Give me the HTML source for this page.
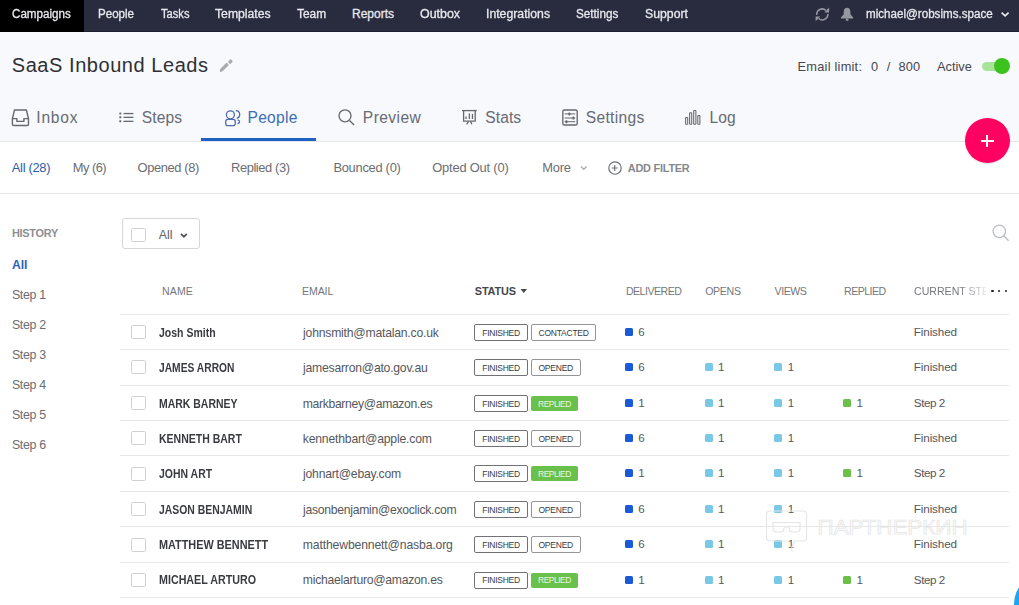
<!DOCTYPE html>
<html><head><meta charset="utf-8"><style>
html,body{margin:0;padding:0;width:1019px;height:605px;overflow:hidden;background:#fff}
body{position:relative;font-family:"Liberation Sans",sans-serif}
.t{position:absolute;line-height:1;white-space:nowrap}
.b{position:absolute;box-sizing:border-box}
.i{position:absolute;overflow:visible}
</style></head><body>
<div class="b" style="left:0px;top:0px;width:1019px;height:31px;background:#292b3f"></div>
<div class="b" style="left:0px;top:31px;width:1019px;height:1px;background:#1e1f2e"></div>
<div class="b" style="left:0px;top:0px;width:84px;height:32px;background:#000"></div>
<div class="b" style="left:0px;top:32px;width:1019px;height:109px;background:#f8f9fc"></div>
<div class="b" style="left:0px;top:141px;width:1019px;height:1px;background:#e5e6ea"></div>
<div class="t" style="left:12.30px;top:8.00px;font-size:12.00px;letter-spacing:0.000px;color:#e8e9ee;-webkit-text-stroke:0.3px #e8e9ee;transform:scaleX(0.9687);transform-origin:0.00px 0;">Campaigns</div>
<div class="t" style="left:97.70px;top:8.00px;font-size:12.00px;letter-spacing:0.000px;color:#e8e9ee;-webkit-text-stroke:0.3px #e8e9ee;transform:scaleX(0.9652);transform-origin:0.00px 0;">People</div>
<div class="t" style="left:160.50px;top:8.00px;font-size:12.00px;letter-spacing:0.000px;color:#e8e9ee;-webkit-text-stroke:0.3px #e8e9ee;transform:scaleX(0.9283);transform-origin:0.00px 0;">Tasks</div>
<div class="t" style="left:215.40px;top:8.00px;font-size:12.00px;letter-spacing:0.000px;color:#e8e9ee;-webkit-text-stroke:0.3px #e8e9ee;transform:scaleX(1.0165);transform-origin:0.00px 0;">Templates</div>
<div class="t" style="left:297.00px;top:8.00px;font-size:12.00px;letter-spacing:0.000px;color:#e8e9ee;-webkit-text-stroke:0.3px #e8e9ee;transform:scaleX(0.9898);transform-origin:0.00px 0;">Team</div>
<div class="t" style="left:352.00px;top:8.00px;font-size:12.00px;letter-spacing:0.000px;color:#e8e9ee;-webkit-text-stroke:0.3px #e8e9ee;transform:scaleX(1.0000);transform-origin:0.00px 0;">Reports</div>
<div class="t" style="left:419.50px;top:8.00px;font-size:12.00px;letter-spacing:0.000px;color:#e8e9ee;-webkit-text-stroke:0.3px #e8e9ee;transform:scaleX(1.0362);transform-origin:0.00px 0;">Outbox</div>
<div class="t" style="left:486.00px;top:8.00px;font-size:12.00px;letter-spacing:0.000px;color:#e8e9ee;-webkit-text-stroke:0.3px #e8e9ee;transform:scaleX(1.0207);transform-origin:0.00px 0;">Integrations</div>
<div class="t" style="left:576.00px;top:8.00px;font-size:12.00px;letter-spacing:0.000px;color:#e8e9ee;-webkit-text-stroke:0.3px #e8e9ee;transform:scaleX(0.9770);transform-origin:0.00px 0;">Settings</div>
<div class="t" style="left:644.70px;top:8.00px;font-size:12.00px;letter-spacing:0.000px;color:#e8e9ee;-webkit-text-stroke:0.3px #e8e9ee;transform:scaleX(1.0214);transform-origin:0.00px 0;">Support</div>
<div class="t" style="left:866.30px;top:8.00px;font-size:12.00px;letter-spacing:0.000px;color:#e8e9ee;-webkit-text-stroke:0.3px #e8e9ee;transform:scaleX(0.9679);transform-origin:0.00px 0;">michael@robsims.space</div>
<div class="t" style="left:11.80px;top:55.00px;font-size:20.00px;letter-spacing:0.553px;color:#2e3034;">SaaS Inbound Leads</div>
<div class="t" style="left:797.60px;top:61.00px;font-size:12.80px;letter-spacing:0.227px;color:#45474c;">Email limit:</div>
<div class="t" style="left:871.00px;top:61.00px;font-size:12.80px;letter-spacing:0.000px;color:#45474c;">0</div>
<div class="t" style="left:886.70px;top:61.00px;font-size:12.80px;letter-spacing:0.000px;color:#45474c;">/</div>
<div class="t" style="left:898.40px;top:61.00px;font-size:12.80px;letter-spacing:0.200px;color:#45474c;">800</div>
<div class="t" style="left:937.00px;top:61.00px;font-size:12.80px;letter-spacing:-0.020px;color:#45474c;">Active</div>
<div class="b" style="left:982px;top:62px;width:26px;height:9px;background:#a8e39a;border-radius:5px"></div>
<div class="b" style="left:994px;top:58px;width:16px;height:16px;background:#3cc21e;border-radius:50%"></div>
<div class="t" style="left:36.30px;top:110.00px;font-size:15.60px;letter-spacing:0.750px;color:#676b73;">Inbox</div>
<div class="t" style="left:141.70px;top:110.00px;font-size:15.60px;letter-spacing:0.125px;color:#676b73;">Steps</div>
<div class="t" style="left:247.50px;top:110.00px;font-size:15.60px;letter-spacing:0.260px;color:#3f6db5;">People</div>
<div class="t" style="left:362.80px;top:110.00px;font-size:15.60px;letter-spacing:0.433px;color:#676b73;">Preview</div>
<div class="t" style="left:485.30px;top:110.00px;font-size:15.60px;letter-spacing:0.075px;color:#676b73;">Stats</div>
<div class="t" style="left:585.80px;top:110.00px;font-size:15.60px;letter-spacing:0.300px;color:#676b73;">Settings</div>
<div class="t" style="left:709.50px;top:110.00px;font-size:15.60px;letter-spacing:0.050px;color:#676b73;">Log</div>
<div class="b" style="left:201px;top:138px;width:115px;height:3px;background:#2160c4"></div>
<div class="b" style="left:965px;top:118px;width:45px;height:45px;border-radius:50%;background:#ff0261;box-shadow:0 1px 2px rgba(0,0,0,.12)"></div>
<div class="b" style="left:981px;top:139.5px;width:12.5px;height:2px;background:#fff"></div>
<div class="b" style="left:986.25px;top:134.5px;width:2px;height:12.5px;background:#fff"></div>
<div class="t" style="left:11.80px;top:162.00px;font-size:12.90px;letter-spacing:-0.300px;color:#2d5cab;">All (28)</div>
<div class="t" style="left:72.70px;top:162.00px;font-size:12.90px;letter-spacing:-0.520px;color:#6b6d72;">My (6)</div>
<div class="t" style="left:137.50px;top:162.00px;font-size:12.90px;letter-spacing:-0.389px;color:#6b6d72;">Opened (8)</div>
<div class="t" style="left:231.00px;top:162.00px;font-size:12.90px;letter-spacing:-0.410px;color:#6b6d72;">Replied (3)</div>
<div class="t" style="left:333.40px;top:162.00px;font-size:12.90px;letter-spacing:-0.280px;color:#6b6d72;">Bounced (0)</div>
<div class="t" style="left:432.30px;top:162.00px;font-size:12.90px;letter-spacing:-0.200px;color:#6b6d72;">Opted Out (0)</div>
<div class="t" style="left:542.20px;top:162.00px;font-size:12.90px;letter-spacing:-0.233px;color:#6b6d72;">More</div>
<div class="t" style="left:627.80px;top:163.00px;font-size:10.90px;font-weight:bold;letter-spacing:-0.222px;color:#86888d;">ADD FILTER</div>
<div class="b" style="left:0px;top:193px;width:1019px;height:1px;background:#e6e6e8"></div>
<div class="t" style="left:11.90px;top:228.00px;font-size:10.90px;font-weight:bold;letter-spacing:-0.233px;color:#8c8e92;">HISTORY</div>
<div class="t" style="left:11.90px;top:259.00px;font-size:12.20px;font-weight:bold;letter-spacing:0.000px;color:#2d62b5;">All</div>
<div class="t" style="left:11.90px;top:289.00px;font-size:12.40px;letter-spacing:-0.320px;color:#6a6c70;">Step 1</div>
<div class="t" style="left:11.90px;top:319.00px;font-size:12.40px;letter-spacing:-0.320px;color:#6a6c70;">Step 2</div>
<div class="t" style="left:11.90px;top:349.00px;font-size:12.40px;letter-spacing:-0.320px;color:#6a6c70;">Step 3</div>
<div class="t" style="left:11.90px;top:379.00px;font-size:12.40px;letter-spacing:-0.320px;color:#6a6c70;">Step 4</div>
<div class="t" style="left:11.90px;top:409.00px;font-size:12.40px;letter-spacing:-0.320px;color:#6a6c70;">Step 5</div>
<div class="t" style="left:11.90px;top:439.00px;font-size:12.40px;letter-spacing:-0.320px;color:#6a6c70;">Step 6</div>
<div class="b" style="left:121.5px;top:218.2px;width:78px;height:31.3px;border:1px solid #d6d7da;border-radius:3px;background:#fff"></div>
<div class="b" style="left:131.3px;top:227.9px;width:14.4px;height:14px;border:1px solid #d0d1d4;border-radius:1.5px;background:#fff"></div>
<div class="t" style="left:158.70px;top:229.00px;font-size:12.40px;letter-spacing:0.000px;color:#5f6166;">All</div>
<div class="t" style="left:162.00px;top:286.00px;font-size:10.60px;letter-spacing:0.100px;color:#75777c;">NAME</div>
<div class="t" style="left:302.00px;top:286.00px;font-size:10.60px;letter-spacing:-0.125px;color:#75777c;">EMAIL</div>
<div class="t" style="left:474.80px;top:286.00px;font-size:10.90px;font-weight:bold;letter-spacing:-0.140px;color:#45474b;">STATUS</div>
<div class="t" style="left:625.90px;top:286.00px;font-size:10.60px;letter-spacing:-0.500px;color:#75777c;">DELIVERED</div>
<div class="t" style="left:705.20px;top:286.00px;font-size:10.60px;letter-spacing:-0.325px;color:#75777c;">OPENS</div>
<div class="t" style="left:774.60px;top:286.00px;font-size:10.60px;letter-spacing:-0.475px;color:#75777c;">VIEWS</div>
<div class="t" style="left:844.00px;top:286.00px;font-size:10.60px;letter-spacing:-0.517px;color:#75777c;">REPLIED</div>
<div class="t" style="left:914.00px;top:286.00px;font-size:10.60px;letter-spacing:0.000px;color:#75777c;width:72px;overflow:hidden;white-space:nowrap;-webkit-mask-image:linear-gradient(90deg,#000 62%,rgba(0,0,0,0.15) 100%)">CURRENT STEP</div>
<div class="b" style="left:991.2px;top:289.5px;width:2.6px;height:2.6px;background:#222;border-radius:50%"></div>
<div class="b" style="left:997.7px;top:289.5px;width:2.6px;height:2.6px;background:#222;border-radius:50%"></div>
<div class="b" style="left:1004.7px;top:289.5px;width:2.6px;height:2.6px;background:#222;border-radius:50%"></div>
<div class="b" style="left:120px;top:314px;width:889px;height:1px;background:#e6e7e9"></div>
<div class="b" style="left:120px;top:349px;width:889px;height:1px;background:#e6e7e9"></div>
<div class="b" style="left:120px;top:385px;width:889px;height:1px;background:#e6e7e9"></div>
<div class="b" style="left:120px;top:420px;width:889px;height:1px;background:#e6e7e9"></div>
<div class="b" style="left:120px;top:455px;width:889px;height:1px;background:#e6e7e9"></div>
<div class="b" style="left:120px;top:491px;width:889px;height:1px;background:#e6e7e9"></div>
<div class="b" style="left:120px;top:526px;width:889px;height:1px;background:#e6e7e9"></div>
<div class="b" style="left:120px;top:562px;width:889px;height:1px;background:#e6e7e9"></div>
<div class="b" style="left:120px;top:597px;width:889px;height:1px;background:#e6e7e9"></div>
<div class="b" style="left:131.3px;top:325px;width:14.3px;height:14.3px;border:1.2px solid #d0d1d3;border-radius:1.5px;background:#fff"></div>
<div class="t" style="left:158.80px;top:327.00px;font-size:12.00px;font-weight:bold;letter-spacing:0.000px;color:#393b40;transform:scaleX(0.8764);transform-origin:0.00px 0;">Josh Smith</div>
<div class="t" style="left:303.10px;top:327.00px;font-size:12.20px;letter-spacing:-0.214px;color:#55575c;">johnsmith@matalan.co.uk</div>
<div class="b" style="left:474px;top:324px;width:54px;height:16.5px;border:1px solid #707276;border-radius:2px;background:#fff"></div>
<div class="t" style="left:482.30px;top:329.00px;font-size:8.50px;letter-spacing:-0.271px;color:#3a3c40;">FINISHED</div>
<div class="b" style="left:530.7px;top:324px;width:65.79999999999995px;height:16.5px;border:1px solid #939599;border-radius:2px;background:#fff"></div>
<div class="t" style="left:538.50px;top:329.00px;font-size:8.50px;letter-spacing:-0.225px;color:#3a3c40;">CONTACTED</div>
<div class="b" style="left:625px;top:327.8px;width:8px;height:8px;background:#1a5ad6;border-radius:1.5px"></div>
<div class="t" style="left:638.30px;top:326.00px;font-size:11.60px;letter-spacing:0.000px;color:#55575c;">6</div>
<div class="t" style="left:913.80px;top:326.00px;font-size:11.70px;letter-spacing:-0.129px;color:#55575c;">Finished</div>
<div class="b" style="left:131.3px;top:360px;width:14.3px;height:14.3px;border:1.2px solid #d0d1d3;border-radius:1.5px;background:#fff"></div>
<div class="t" style="left:158.80px;top:362.00px;font-size:12.00px;font-weight:bold;letter-spacing:0.000px;color:#393b40;transform:scaleX(0.8549);transform-origin:0.00px 0;">JAMES ARRON</div>
<div class="t" style="left:303.10px;top:362.00px;font-size:12.20px;letter-spacing:-0.230px;color:#55575c;">jamesarron@ato.gov.au</div>
<div class="b" style="left:474px;top:359px;width:54px;height:16.5px;border:1px solid #707276;border-radius:2px;background:#fff"></div>
<div class="t" style="left:482.30px;top:364.00px;font-size:8.50px;letter-spacing:-0.271px;color:#3a3c40;">FINISHED</div>
<div class="b" style="left:530.7px;top:359px;width:50.0px;height:16.5px;border:1px solid #939599;border-radius:2px;background:#fff"></div>
<div class="t" style="left:538.50px;top:364.00px;font-size:8.50px;letter-spacing:-0.240px;color:#3a3c40;">OPENED</div>
<div class="b" style="left:625px;top:362.8px;width:8px;height:8px;background:#1a5ad6;border-radius:1.5px"></div>
<div class="t" style="left:638.30px;top:361.00px;font-size:11.60px;letter-spacing:0.000px;color:#55575c;">6</div>
<div class="b" style="left:704.6px;top:362.8px;width:8px;height:8px;background:#79c8e6;border-radius:1.5px"></div>
<div class="t" style="left:717.90px;top:361.00px;font-size:11.60px;letter-spacing:0.000px;color:#55575c;">1</div>
<div class="b" style="left:774.4px;top:362.8px;width:8px;height:8px;background:#79c8e6;border-radius:1.5px"></div>
<div class="t" style="left:787.70px;top:361.00px;font-size:11.60px;letter-spacing:0.000px;color:#55575c;">1</div>
<div class="t" style="left:913.80px;top:361.00px;font-size:11.70px;letter-spacing:-0.129px;color:#55575c;">Finished</div>
<div class="b" style="left:131.3px;top:396px;width:14.3px;height:14.3px;border:1.2px solid #d0d1d3;border-radius:1.5px;background:#fff"></div>
<div class="t" style="left:158.80px;top:398.00px;font-size:12.00px;font-weight:bold;letter-spacing:0.000px;color:#393b40;transform:scaleX(0.8722);transform-origin:0.00px 0;">MARK BARNEY</div>
<div class="t" style="left:302.80px;top:398.00px;font-size:12.20px;letter-spacing:-0.347px;color:#55575c;">markbarney@amazon.es</div>
<div class="b" style="left:474px;top:395px;width:54px;height:16.5px;border:1px solid #707276;border-radius:2px;background:#fff"></div>
<div class="t" style="left:482.30px;top:400.00px;font-size:8.50px;letter-spacing:-0.271px;color:#3a3c40;">FINISHED</div>
<div class="b" style="left:531px;top:395.6px;width:47px;height:15.4px;background:#69c04a;border-radius:2px"></div>
<div class="t" style="left:538.00px;top:400.00px;font-size:8.50px;letter-spacing:-0.500px;color:#eaf7e2;">REPLIED</div>
<div class="b" style="left:625px;top:398.8px;width:8px;height:8px;background:#1a5ad6;border-radius:1.5px"></div>
<div class="t" style="left:638.30px;top:397.00px;font-size:11.60px;letter-spacing:0.000px;color:#55575c;">1</div>
<div class="b" style="left:704.6px;top:398.8px;width:8px;height:8px;background:#79c8e6;border-radius:1.5px"></div>
<div class="t" style="left:717.90px;top:397.00px;font-size:11.60px;letter-spacing:0.000px;color:#55575c;">1</div>
<div class="b" style="left:774.4px;top:398.8px;width:8px;height:8px;background:#79c8e6;border-radius:1.5px"></div>
<div class="t" style="left:787.70px;top:397.00px;font-size:11.60px;letter-spacing:0.000px;color:#55575c;">1</div>
<div class="b" style="left:843.2px;top:398.8px;width:8px;height:8px;background:#6cbf47;border-radius:1.5px"></div>
<div class="t" style="left:856.50px;top:397.00px;font-size:11.60px;letter-spacing:0.000px;color:#55575c;">1</div>
<div class="t" style="left:913.80px;top:397.00px;font-size:11.70px;letter-spacing:-0.460px;color:#55575c;">Step 2</div>
<div class="b" style="left:131.3px;top:431px;width:14.3px;height:14.3px;border:1.2px solid #d0d1d3;border-radius:1.5px;background:#fff"></div>
<div class="t" style="left:158.80px;top:433.00px;font-size:12.00px;font-weight:bold;letter-spacing:0.000px;color:#393b40;transform:scaleX(0.8754);transform-origin:0.00px 0;">KENNETH BART</div>
<div class="t" style="left:302.80px;top:433.00px;font-size:12.20px;letter-spacing:-0.195px;color:#55575c;">kennethbart@apple.com</div>
<div class="b" style="left:474px;top:430px;width:54px;height:16.5px;border:1px solid #707276;border-radius:2px;background:#fff"></div>
<div class="t" style="left:482.30px;top:435.00px;font-size:8.50px;letter-spacing:-0.271px;color:#3a3c40;">FINISHED</div>
<div class="b" style="left:530.7px;top:430px;width:50.0px;height:16.5px;border:1px solid #939599;border-radius:2px;background:#fff"></div>
<div class="t" style="left:538.50px;top:435.00px;font-size:8.50px;letter-spacing:-0.240px;color:#3a3c40;">OPENED</div>
<div class="b" style="left:625px;top:433.8px;width:8px;height:8px;background:#1a5ad6;border-radius:1.5px"></div>
<div class="t" style="left:638.30px;top:432.00px;font-size:11.60px;letter-spacing:0.000px;color:#55575c;">6</div>
<div class="b" style="left:704.6px;top:433.8px;width:8px;height:8px;background:#79c8e6;border-radius:1.5px"></div>
<div class="t" style="left:717.90px;top:432.00px;font-size:11.60px;letter-spacing:0.000px;color:#55575c;">1</div>
<div class="b" style="left:774.4px;top:433.8px;width:8px;height:8px;background:#79c8e6;border-radius:1.5px"></div>
<div class="t" style="left:787.70px;top:432.00px;font-size:11.60px;letter-spacing:0.000px;color:#55575c;">1</div>
<div class="t" style="left:913.80px;top:432.00px;font-size:11.70px;letter-spacing:-0.129px;color:#55575c;">Finished</div>
<div class="b" style="left:131.3px;top:467px;width:14.3px;height:14.3px;border:1.2px solid #d0d1d3;border-radius:1.5px;background:#fff"></div>
<div class="t" style="left:158.80px;top:468.00px;font-size:12.00px;font-weight:bold;letter-spacing:0.000px;color:#393b40;transform:scaleX(0.8719);transform-origin:0.00px 0;">JOHN ART</div>
<div class="t" style="left:303.10px;top:468.00px;font-size:12.20px;letter-spacing:-0.233px;color:#55575c;">johnart@ebay.com</div>
<div class="b" style="left:474px;top:465px;width:54px;height:16.5px;border:1px solid #707276;border-radius:2px;background:#fff"></div>
<div class="t" style="left:482.30px;top:470.00px;font-size:8.50px;letter-spacing:-0.271px;color:#3a3c40;">FINISHED</div>
<div class="b" style="left:531px;top:465.6px;width:47px;height:15.4px;background:#69c04a;border-radius:2px"></div>
<div class="t" style="left:538.00px;top:470.00px;font-size:8.50px;letter-spacing:-0.500px;color:#eaf7e2;">REPLIED</div>
<div class="b" style="left:625px;top:468.8px;width:8px;height:8px;background:#1a5ad6;border-radius:1.5px"></div>
<div class="t" style="left:638.30px;top:467.00px;font-size:11.60px;letter-spacing:0.000px;color:#55575c;">1</div>
<div class="b" style="left:704.6px;top:468.8px;width:8px;height:8px;background:#79c8e6;border-radius:1.5px"></div>
<div class="t" style="left:717.90px;top:467.00px;font-size:11.60px;letter-spacing:0.000px;color:#55575c;">1</div>
<div class="b" style="left:774.4px;top:468.8px;width:8px;height:8px;background:#79c8e6;border-radius:1.5px"></div>
<div class="t" style="left:787.70px;top:467.00px;font-size:11.60px;letter-spacing:0.000px;color:#55575c;">1</div>
<div class="b" style="left:843.2px;top:468.8px;width:8px;height:8px;background:#6cbf47;border-radius:1.5px"></div>
<div class="t" style="left:856.50px;top:467.00px;font-size:11.60px;letter-spacing:0.000px;color:#55575c;">1</div>
<div class="t" style="left:913.80px;top:467.00px;font-size:11.70px;letter-spacing:-0.460px;color:#55575c;">Step 2</div>
<div class="b" style="left:131.3px;top:502px;width:14.3px;height:14.3px;border:1.2px solid #d0d1d3;border-radius:1.5px;background:#fff"></div>
<div class="t" style="left:158.80px;top:504.00px;font-size:12.00px;font-weight:bold;letter-spacing:0.000px;color:#393b40;transform:scaleX(0.8678);transform-origin:0.00px 0;">JASON BENJAMIN</div>
<div class="t" style="left:303.10px;top:504.00px;font-size:12.20px;letter-spacing:-0.288px;color:#55575c;">jasonbenjamin@exoclick.com</div>
<div class="b" style="left:474px;top:501px;width:54px;height:16.5px;border:1px solid #707276;border-radius:2px;background:#fff"></div>
<div class="t" style="left:482.30px;top:506.00px;font-size:8.50px;letter-spacing:-0.271px;color:#3a3c40;">FINISHED</div>
<div class="b" style="left:530.7px;top:501px;width:50.0px;height:16.5px;border:1px solid #939599;border-radius:2px;background:#fff"></div>
<div class="t" style="left:538.50px;top:506.00px;font-size:8.50px;letter-spacing:-0.240px;color:#3a3c40;">OPENED</div>
<div class="b" style="left:625px;top:504.8px;width:8px;height:8px;background:#1a5ad6;border-radius:1.5px"></div>
<div class="t" style="left:638.30px;top:503.00px;font-size:11.60px;letter-spacing:0.000px;color:#55575c;">6</div>
<div class="b" style="left:704.6px;top:504.8px;width:8px;height:8px;background:#79c8e6;border-radius:1.5px"></div>
<div class="t" style="left:717.90px;top:503.00px;font-size:11.60px;letter-spacing:0.000px;color:#55575c;">1</div>
<div class="b" style="left:774.4px;top:504.8px;width:8px;height:8px;background:#79c8e6;border-radius:1.5px"></div>
<div class="t" style="left:787.70px;top:503.00px;font-size:11.60px;letter-spacing:0.000px;color:#55575c;">1</div>
<div class="t" style="left:913.80px;top:503.00px;font-size:11.70px;letter-spacing:-0.129px;color:#55575c;">Finished</div>
<div class="b" style="left:131.3px;top:538px;width:14.3px;height:14.3px;border:1.2px solid #d0d1d3;border-radius:1.5px;background:#fff"></div>
<div class="t" style="left:158.80px;top:539.00px;font-size:12.00px;font-weight:bold;letter-spacing:0.000px;color:#393b40;transform:scaleX(0.9053);transform-origin:0.00px 0;">MATTHEW BENNETT</div>
<div class="t" style="left:302.80px;top:539.00px;font-size:12.20px;letter-spacing:-0.139px;color:#55575c;">matthewbennett@nasba.org</div>
<div class="b" style="left:474px;top:536px;width:54px;height:16.5px;border:1px solid #707276;border-radius:2px;background:#fff"></div>
<div class="t" style="left:482.30px;top:541.00px;font-size:8.50px;letter-spacing:-0.271px;color:#3a3c40;">FINISHED</div>
<div class="b" style="left:530.7px;top:536px;width:50.0px;height:16.5px;border:1px solid #939599;border-radius:2px;background:#fff"></div>
<div class="t" style="left:538.50px;top:541.00px;font-size:8.50px;letter-spacing:-0.240px;color:#3a3c40;">OPENED</div>
<div class="b" style="left:625px;top:539.8px;width:8px;height:8px;background:#1a5ad6;border-radius:1.5px"></div>
<div class="t" style="left:638.30px;top:538.00px;font-size:11.60px;letter-spacing:0.000px;color:#55575c;">6</div>
<div class="b" style="left:704.6px;top:539.8px;width:8px;height:8px;background:#79c8e6;border-radius:1.5px"></div>
<div class="t" style="left:717.90px;top:538.00px;font-size:11.60px;letter-spacing:0.000px;color:#55575c;">1</div>
<div class="b" style="left:774.4px;top:539.8px;width:8px;height:8px;background:#79c8e6;border-radius:1.5px"></div>
<div class="t" style="left:787.70px;top:538.00px;font-size:11.60px;letter-spacing:0.000px;color:#55575c;">1</div>
<div class="t" style="left:913.80px;top:538.00px;font-size:11.70px;letter-spacing:-0.129px;color:#55575c;">Finished</div>
<div class="b" style="left:131.3px;top:573px;width:14.3px;height:14.3px;border:1.2px solid #d0d1d3;border-radius:1.5px;background:#fff"></div>
<div class="t" style="left:158.80px;top:574.00px;font-size:12.00px;font-weight:bold;letter-spacing:0.000px;color:#393b40;transform:scaleX(0.8924);transform-origin:0.00px 0;">MICHAEL ARTURO</div>
<div class="t" style="left:302.80px;top:574.00px;font-size:12.20px;letter-spacing:-0.264px;color:#55575c;">michaelarturo@amazon.es</div>
<div class="b" style="left:474px;top:572px;width:54px;height:16.5px;border:1px solid #707276;border-radius:2px;background:#fff"></div>
<div class="t" style="left:482.30px;top:576.00px;font-size:8.50px;letter-spacing:-0.271px;color:#3a3c40;">FINISHED</div>
<div class="b" style="left:531px;top:572.6px;width:47px;height:15.4px;background:#69c04a;border-radius:2px"></div>
<div class="t" style="left:538.00px;top:576.00px;font-size:8.50px;letter-spacing:-0.500px;color:#eaf7e2;">REPLIED</div>
<div class="b" style="left:625px;top:575.8px;width:8px;height:8px;background:#1a5ad6;border-radius:1.5px"></div>
<div class="t" style="left:638.30px;top:574.00px;font-size:11.60px;letter-spacing:0.000px;color:#55575c;">1</div>
<div class="b" style="left:704.6px;top:575.8px;width:8px;height:8px;background:#79c8e6;border-radius:1.5px"></div>
<div class="t" style="left:717.90px;top:574.00px;font-size:11.60px;letter-spacing:0.000px;color:#55575c;">1</div>
<div class="b" style="left:774.4px;top:575.8px;width:8px;height:8px;background:#79c8e6;border-radius:1.5px"></div>
<div class="t" style="left:787.70px;top:574.00px;font-size:11.60px;letter-spacing:0.000px;color:#55575c;">1</div>
<div class="b" style="left:843.2px;top:575.8px;width:8px;height:8px;background:#6cbf47;border-radius:1.5px"></div>
<div class="t" style="left:856.50px;top:574.00px;font-size:11.60px;letter-spacing:0.000px;color:#55575c;">1</div>
<div class="t" style="left:913.80px;top:574.00px;font-size:11.70px;letter-spacing:-0.460px;color:#55575c;">Step 2</div>
<div class="b" style="left:1014px;top:574px;width:60px;height:60px;border-radius:50%;background:#1ea5f2"></div><svg style="position:absolute;left:0;top:0" width="1019" height="605" viewBox="0 0 1019 605"><g fill="none" stroke="#9597a3" stroke-width="1.6"><path d="M816.8 14.9A5.5 5.5 0 0 1 825.9 10.3"/><path d="M827.8 13.9A5.5 5.5 0 0 1 818.7 18.5"/></g><path d="M829.1 7.6v4.8h-4.8z" fill="#9597a3"/><path d="M815.6 21.2v-4.8h4.8z" fill="#9597a3"/><path d="M847.1 7.8c1.9 0 3.3 1.6 3.3 3.9v2.6l2.8 3.3v.9h-12.3v-.9l2.8-3.3v-2.6c0-2.3 1.5-3.9 3.4-3.9z" fill="#9597a3"/><rect x="845.9" y="18.6" width="2.5" height="2.2" rx=".6" fill="#9597a3"/><path d="M1001.6 12.6l3.5 3.3 3.5-3.3" fill="none" stroke="#e8e9ee" stroke-width="1.7"/><path d="M219.9 71.9L220.1 69.1L226.6 62.6L228.9 64.9L222.4 71.4z" fill="#a9abaf"/><path d="M227.9 61.9L230 59.6Q230.6 59 231.2 59.6L232.4 60.8Q233 61.4 232.4 62L230.3 64.2z" fill="#a9abaf"/><g fill="none" stroke="#66686d" stroke-width="1.4" stroke-linejoin="round"><path d="M12.4 118.6L14.5 110h11.9l2.1 8.6"/><path d="M12.4 118.6v5.6q0 1.3 1.3 1.3h13.5q1.3 0 1.3-1.3v-5.6h-4.6v2.8h-7v-2.8z"/></g><g fill="#66686d"><rect x="119.3" y="112.5" width="2" height="2" rx=".5"/><rect x="119.3" y="116.3" width="2" height="2" rx=".5"/><rect x="119.3" y="120.3" width="2" height="2" rx=".5"/><rect x="123.5" y="112.9" width="9.9" height="1.3"/><rect x="123.5" y="116.7" width="9.9" height="1.3"/><rect x="123.5" y="120.7" width="9.9" height="1.3"/></g><g fill="none" stroke="#4b6aab" stroke-width="1.25"><circle cx="230.4" cy="114.8" r="4"/><rect x="225.7" y="119.4" width="9.6" height="6.3" rx="2.2"/><path d="M235.8 110.6a3.9 3.9 0 0 1 .9 7.7"/><path d="M237.6 119.8q2 .5 2 2.3q0 1.3-2.2 1.6"/></g><g fill="none" stroke="#66686d" stroke-width="1.35"><circle cx="345" cy="115.8" r="6"/><path d="M349.5 120.4l4.6 4.6"/></g><g fill="none" stroke="#66686d" stroke-width="1.3"><path d="M462 110.6h14.8"/><path d="M463.6 110.6v10.6h11.6v-10.6"/><path d="M468.6 121.4l-2 3M470.5 121.4l1.4 2.8"/></g><g fill="#66686d"><rect x="465.4" y="116.5" width="1.3" height="2.5"/><rect x="468.7" y="113.4" width="1.3" height="5.6"/><rect x="471.8" y="113.9" width="1.3" height="5.1"/></g><g fill="none" stroke="#66686d" stroke-width="1.35"><rect x="562.8" y="110" width="14.4" height="15" rx="1.6"/></g><g fill="#66686d"><rect x="564.6" y="113.4" width="10.6" height="1"/><rect x="564.6" y="117.5" width="10.6" height="1"/><rect x="564.6" y="121.2" width="10.6" height="1"/><rect x="568.4" y="112.4" width="1.9" height="3" rx=".6"/><rect x="572.4" y="116.5" width="1.9" height="3" rx=".6"/><rect x="565.5" y="120.2" width="1.9" height="3" rx=".6"/></g><g fill="none" stroke="#66686d" stroke-width="1.05"><rect x="685.6" y="117.4" width="2.1" height="6.9" rx=".5"/><rect x="689.6" y="112.7" width="2.1" height="11.6" rx=".5"/><rect x="693.7" y="110.5" width="2.2" height="13.8" rx=".5"/><rect x="697.8" y="115.6" width="2.1" height="8.7" rx=".5"/></g><path d="M581 166.5l2.8 2.8 2.8-2.8" fill="none" stroke="#a7a9ad" stroke-width="1.3"/><g fill="none" stroke="#6b6d72" stroke-width="1.15"><circle cx="615" cy="168" r="6.2"/><path d="M614.7 165v6M611.7 168h6"/></g><path d="M181 233.8l2.9 2.9 2.9-2.9" fill="none" stroke="#505257" stroke-width="1.7"/><g fill="none" stroke="#babcc0" stroke-width="1.25"><circle cx="999.3" cy="231.3" r="6.2"/><path d="M1003.8 235.8l4.8 5"/></g><path d="M520.6 289h6.4l-3.2 3.9z" fill="#45474b"/><g fill="none" stroke="#e6e6e6" stroke-width="1.2"><path d="M770 511h33q3.5 0 3.5 3.5v23q0 3.5-3.5 3.5h-8l-3 5.5q-.8 2 .3 5.5M790 541h-20q-3.5 0-3.5-3.5v-23q0-3.5 3.5-3.5"/><path d="M773 522.5h27v6q0 3.5-3.5 3.5h-4q-3 0-3-3q0 -2-2.8-2t-2.8 2q0 3-3 3h-4.4q-3.5 0-3.5-3.5z"/></g><text x="817.6" y="533.5" font-family="Liberation Sans" font-size="19.6" fill="none" stroke="#e6e6e6" stroke-width="0.75" textLength="150" lengthAdjust="spacingAndGlyphs">ПАРТНЕРКИН</text></svg>
</body></html>
